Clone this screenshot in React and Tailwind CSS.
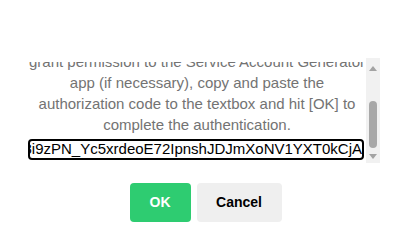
import React, { useEffect, useRef } from "react";

export default function App() {
  const ref = useRef(null);
  useEffect(() => {
    if (ref.current) ref.current.scrollTop = ref.current.scrollHeight;
  }, []);
  return (
    <div className="w-[410px] h-[250px] bg-white relative overflow-hidden" style={{ fontFamily: '"Liberation Sans", Arial, sans-serif' }}>
      <div className="pt-[58px] pl-[28px] pr-[30px] flex items-end">
        <div ref={ref} className="w-[338px] h-[101px] overflow-hidden">
          <p className="text-[15px] leading-[21px] text-[#737373] text-center mb-[4px]">
            Please click the link below to open the Google sign-in page, sign in and
            <br />
            grant permission to the Service Account Generator app (if necessary), copy and paste the authorization code to the textbox and hit [OK] to complete the authentication.
          </p>
          <div className="mb-[3px] w-[336px] h-[21px] border-2 border-black rounded-[4px] flex items-center overflow-hidden">
            <div className="whitespace-nowrap text-[15px] leading-[17px] text-black pl-[1px] pb-[2px] flex justify-end w-full">
              <span>4/0AfJohXn8i9zPN_Yc5xrdeoE72IpnshJDJmXoNV1YXT0kCjA</span>
            </div>
          </div>
        </div>
        <div className="w-[14px] h-[105px] bg-[#f1f1f1] flex flex-col items-center">
          <div className="h-[14px] w-full flex items-center justify-center mt-[3px]">
            <svg width="8" height="5" viewBox="0 0 8 5"><path d="M0 5 L4 0 L8 5 Z" fill="#a3a3a3" /></svg>
          </div>
          <div className="flex-1 w-full flex flex-col justify-end px-[3px] pb-[1px]">
            <div className="h-[47px] w-full rounded-full bg-[#a8a8a8]" />
          </div>
          <div className="h-[14px] w-full flex items-center justify-center">
            <svg width="8" height="5" viewBox="0 0 8 5"><path d="M0 0 L8 0 L4 5 Z" fill="#a3a3a3" /></svg>
          </div>
        </div>
      </div>
      <div className="flex justify-center gap-[6px] mt-[20px] pl-[1px]">
        <button className="w-[61px] h-[39px] rounded-[4px] bg-[#2ecc71] text-white font-bold text-[14px]">OK</button>
        <button className="w-[85px] h-[39px] rounded-[4px] bg-[#efefef] text-black font-bold text-[14px]">Cancel</button>
      </div>
    </div>
  );
}
